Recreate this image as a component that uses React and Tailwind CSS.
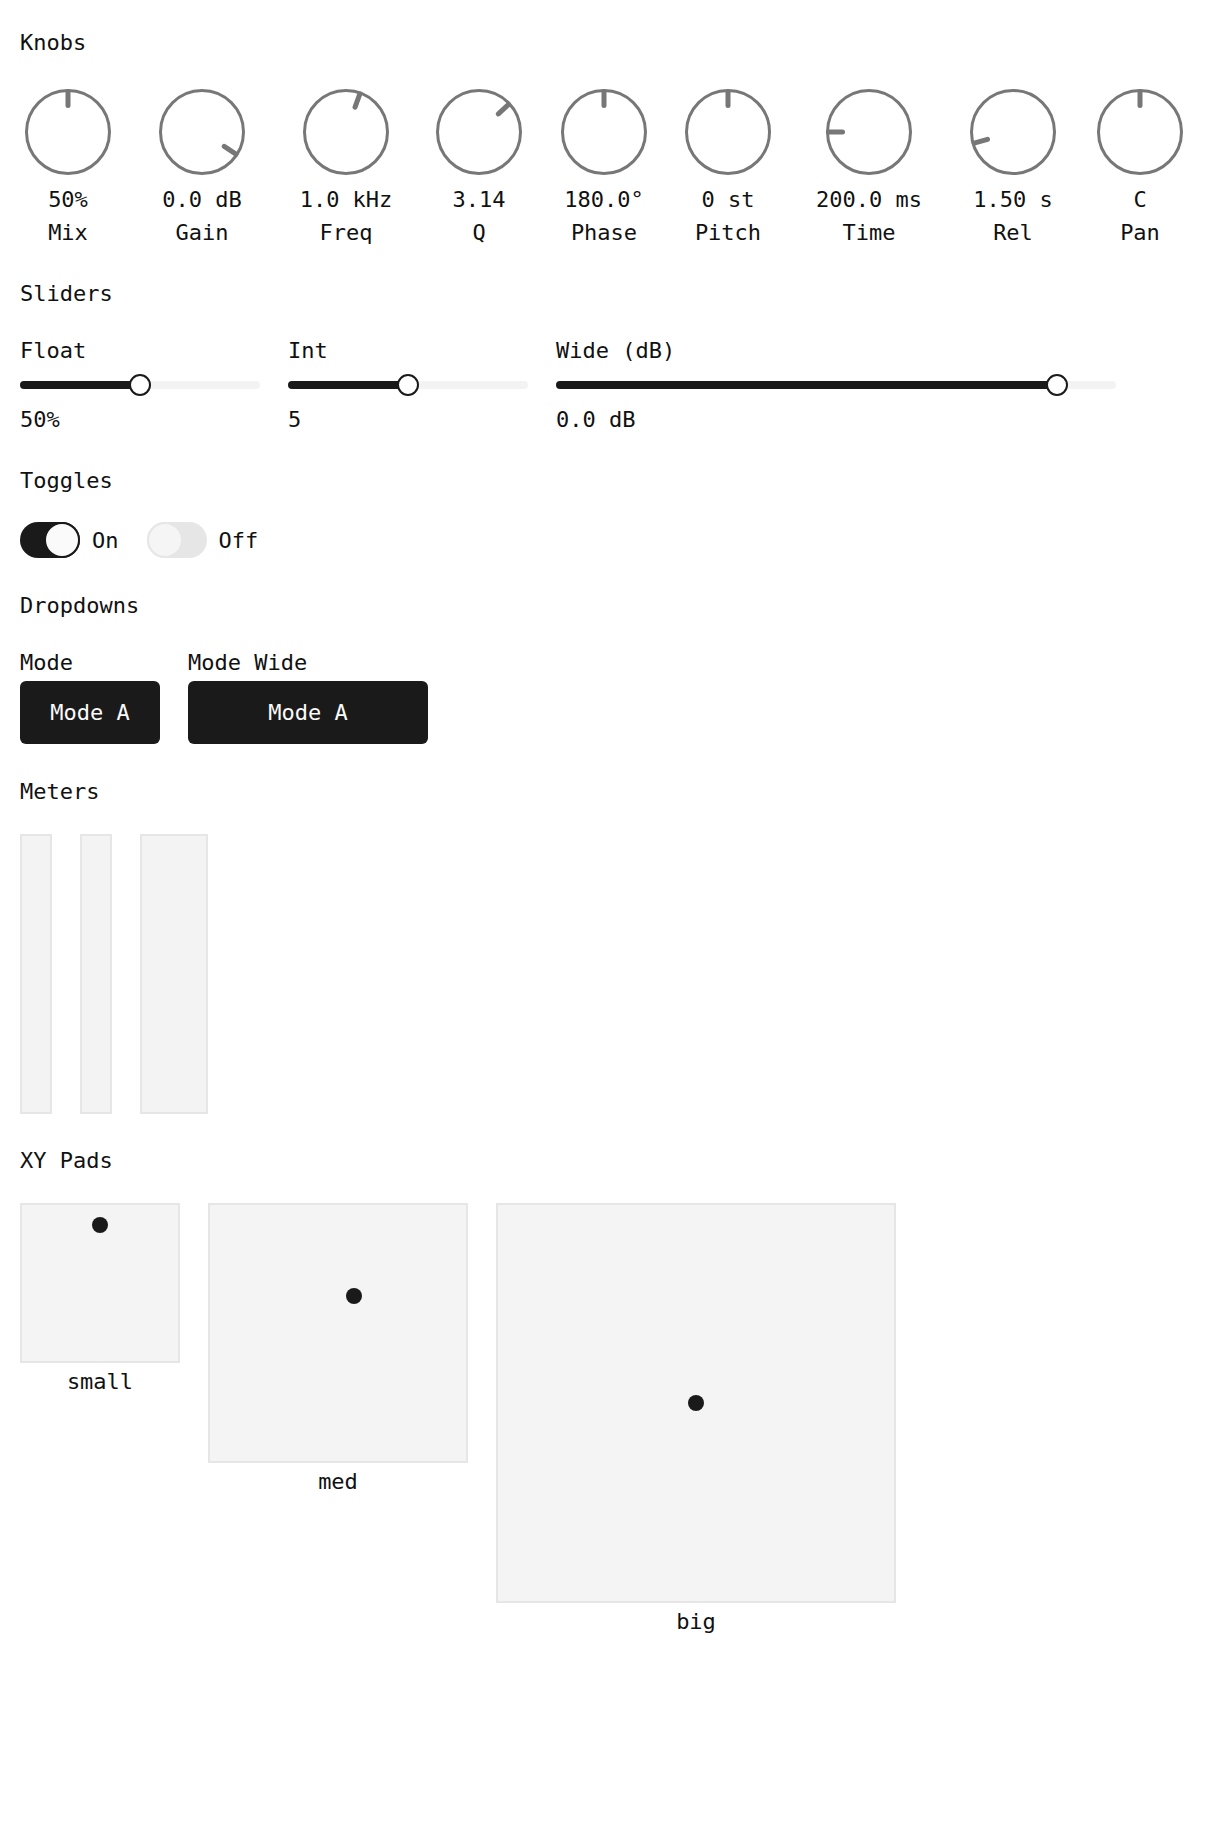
import React from 'react';

const knobs = [
  { value: '50%', label: 'Mix', angle: 0, ml: '' },
  { value: '0.0 dB', label: 'Gain', angle: 123, ml: 'ml-[38px]' },
  { value: '1.0 kHz', label: 'Freq', angle: 20, ml: 'ml-[48px]' },
  { value: '3.14', label: 'Q', angle: 47, ml: 'ml-[37px]' },
  { value: '180.0°', label: 'Phase', angle: 0, ml: 'ml-[29px]' },
  { value: '0 st', label: 'Pitch', angle: 0, ml: 'ml-[28px]' },
  { value: '200.0 ms', label: 'Time', angle: -90, ml: 'ml-[45px]' },
  { value: '1.50 s', label: 'Rel', angle: -106, ml: 'ml-[48px]' },
  { value: 'C', label: 'Pan', angle: 0, ml: 'ml-[31px]' },
];

const sliders = [
  { label: 'Float', value: '50%', pos: 50, width: 'w-[240px]' },
  { label: 'Int', value: '5', pos: 50, width: 'w-[240px]' },
  { label: 'Wide (dB)', value: '0.0 dB', pos: 89.4, width: 'w-[560px]' },
];

const pads = [
  { label: 'small', size: 'w-[160px] h-[160px]', x: 50, y: 12.5 },
  { label: 'med', size: 'w-[260px] h-[260px]', x: 56.25, y: 35.5 },
  { label: 'big', size: 'w-[400px] h-[400px]', x: 50, y: 50 },
];

const Knob = ({ angle }) => {
  const rad = (angle * Math.PI) / 180;
  const pt = (r) => [48 + r * Math.sin(rad), 48 - r * Math.cos(rad)];
  const [x1, y1] = pt(26.5);
  const [x2, y2] = pt(40.5);
  return (
    <svg width="96" height="96" viewBox="0 0 96 96" className="block">
      <circle cx="48" cy="48" r="41.5" fill="none" stroke="#777777" strokeWidth="3" />
      <line x1={x1} y1={y1} x2={x2} y2={y2} stroke="#777777" strokeWidth="5" strokeLinecap="round" />
    </svg>
  );
};

const Toggle = ({ on }) => (
  <div
    className={`flex h-9 w-[60px] rounded-full ${on ? 'justify-end bg-[#1a1a1a]' : 'justify-start bg-[#e6e6e6]'}`}
  >
    <div
      className={`h-9 w-9 rounded-full border-2 ${on ? 'border-[#1a1a1a] bg-[#fafafa]' : 'border-[#e6e6e6] bg-[#f5f5f5]'}`}
    />
  </div>
);

export default function App() {
  return (
    <div className="min-h-screen bg-white px-5 pt-[26px] font-['DejaVu_Sans_Mono',monospace] text-[22px] leading-[33px] text-[#111111]">
      {/* Knobs */}
      <div>Knobs</div>
      <div className="mt-[25px] flex">
        {knobs.map((k) => (
          <div key={k.label} className={`flex w-24 shrink-0 flex-col items-center ${k.ml}`}>
            <Knob angle={k.angle} />
            <div className="mt-[3px] whitespace-nowrap">{k.value}</div>
            <div className="whitespace-nowrap">{k.label}</div>
          </div>
        ))}
      </div>

      {/* Sliders */}
      <div className="mt-[28px]">Sliders</div>
      <div className="mt-[24px] flex gap-7">
        {sliders.map((s) => (
          <div key={s.label} className={`flex flex-col ${s.width}`}>
            <div className="whitespace-nowrap">{s.label}</div>
            <div className="flex h-9 items-center">
              <div className="relative h-2 w-full rounded-full bg-[#f3f3f3]">
                <div className="absolute left-0 top-0 h-2 rounded-full bg-[#1a1a1a]" style={{ width: `${s.pos}%` }} />
                <div
                  className="absolute top-1/2 h-[22px] w-[22px] -translate-x-1/2 -translate-y-1/2 rounded-full border-2 border-[#1a1a1a] bg-white"
                  style={{ left: `${s.pos}%` }}
                />
              </div>
            </div>
            <div className="whitespace-nowrap">{s.value}</div>
          </div>
        ))}
      </div>

      {/* Toggles */}
      <div className="mt-[28px]">Toggles</div>
      <div className="mt-[25px] flex h-9 items-center">
        <Toggle on />
        <span className="ml-3">On</span>
        <div className="ml-7">
          <Toggle on={false} />
        </div>
        <span className="ml-3">Off</span>
      </div>

      {/* Dropdowns */}
      <div className="mt-[31px]">Dropdowns</div>
      <div className="mt-[24px] flex gap-7">
        <div className="flex flex-col">
          <div>Mode</div>
          <button className="mt-[2px] w-[140px] rounded-md bg-[#1a1a1a] py-[15px] text-center text-[#fafafa]">Mode A</button>
        </div>
        <div className="flex flex-col">
          <div>Mode Wide</div>
          <button className="mt-[2px] w-[240px] rounded-md bg-[#1a1a1a] py-[15px] text-center text-[#fafafa]">Mode A</button>
        </div>
      </div>

      {/* Meters */}
      <div className="mt-[31px]">Meters</div>
      <div className="mt-[26px] flex gap-7">
        <div className="h-[280px] w-8 border-2 border-[#e6e6e6] bg-[#f3f3f3]" />
        <div className="h-[280px] w-8 border-2 border-[#e6e6e6] bg-[#f3f3f3]" />
        <div className="h-[280px] w-[68px] border-2 border-[#e6e6e6] bg-[#f3f3f3]" />
      </div>

      {/* XY Pads */}
      <div className="mt-[30px]">XY Pads</div>
      <div className="mt-[26px] flex items-start gap-7 pb-10">
        {pads.map((p) => (
          <div key={p.label} className="flex flex-col items-center">
            <div className={`relative border-2 border-[#e6e6e6] bg-[#f4f4f4] ${p.size}`}>
              <div
                className="absolute h-4 w-4 -translate-x-1/2 -translate-y-1/2 rounded-full bg-[#1a1a1a]"
                style={{ left: `${p.x}%`, top: `${p.y}%` }}
              />
            </div>
            <div className="mt-[2px]">{p.label}</div>
          </div>
        ))}
      </div>
    </div>
  );
}
